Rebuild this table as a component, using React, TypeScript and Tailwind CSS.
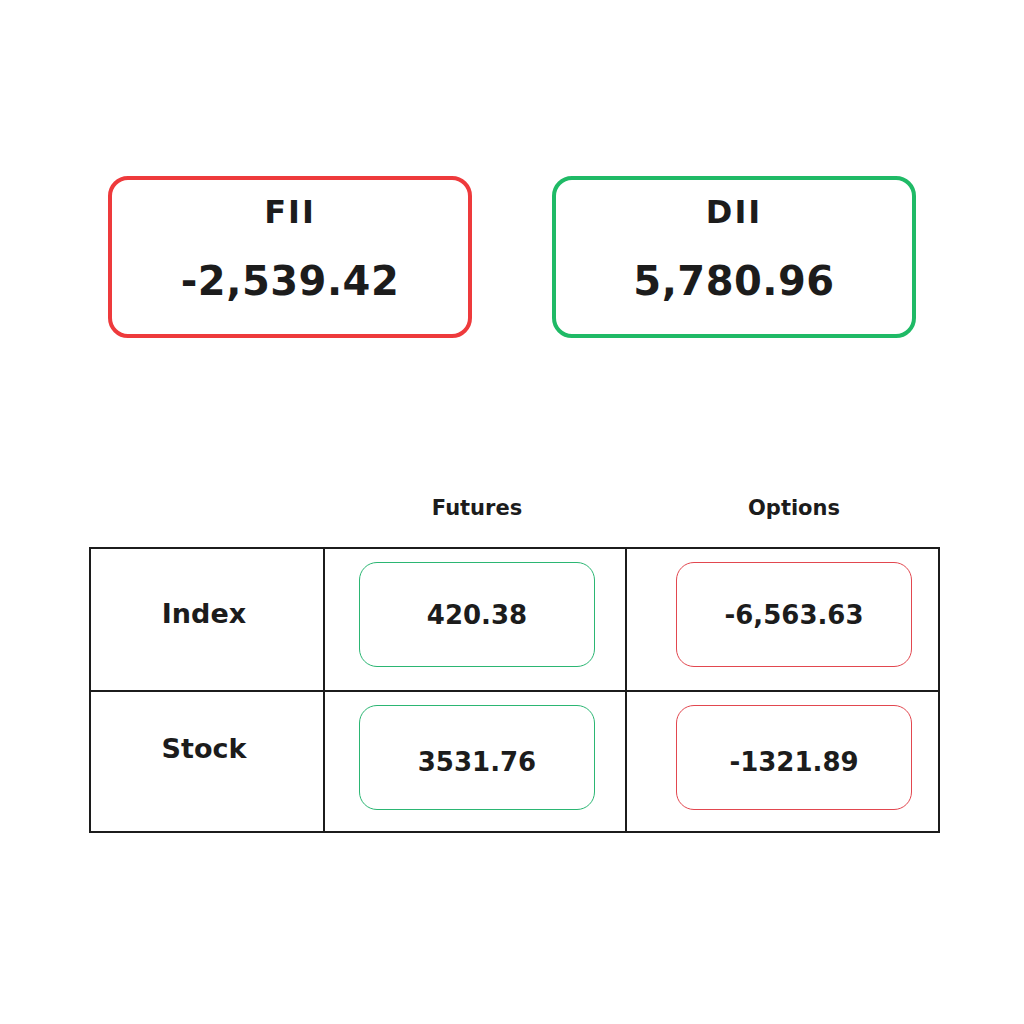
const font = { fontFamily: '"DejaVu Sans", "Liberation Sans", sans-serif' };

export default function App() {
  const rows = [
    { label: "Index", futures: "420.38", options: "-6,563.63", labelPad: "pt-[51px]", valuePad: "pt-0" },
    { label: "Stock", futures: "3531.76", options: "-1321.89", labelPad: "pt-[43px]", valuePad: "pt-[9px]" },
  ];

  return (
    <div className="w-[1024px] h-[1024px] bg-white text-[#1c1c1c] font-bold" style={font}>
      {/* Summary cards */}
      <div className="flex gap-[80px] pl-[108px] pt-[176px]">
        <SummaryCard title="FII" value="-2,539.42" tone="red" />
        <SummaryCard title="DII" value="5,780.96" tone="green" />
      </div>

      {/* Column headers */}
      <div className="flex pl-[89px] mt-[160px]">
        <div className="w-[234px]" />
        <div className="w-[302px] pl-[36px]">
          <div className="w-[236px] text-center text-[21px] leading-none">Futures</div>
        </div>
        <div className="pl-[51px]">
          <div className="w-[236px] text-center text-[21px] leading-none">Options</div>
        </div>
      </div>

      {/* Table */}
      <div className="ml-[89px] mt-[28px] w-[851px] border-2 border-[#1c1c1c]">
        {rows.map((row, i) => (
          <div
            key={row.label}
            className={"flex h-[141px] " + (i > 0 ? "border-t-2 border-[#1c1c1c]" : "")}
          >
            <div className={"w-[232px] pr-[6px] text-center text-[27px] leading-none " + row.labelPad}>
              {row.label}
            </div>
            <div className="w-[302px] border-l-2 border-[#1c1c1c] pl-[34px] pt-[13px]">
              <ValueBox value={row.futures} tone="green" pad={row.valuePad} />
            </div>
            <div className="flex-1 border-l-2 border-[#1c1c1c] pl-[49px] pt-[13px]">
              <ValueBox value={row.options} tone="red" pad={row.valuePad} />
            </div>
          </div>
        ))}
      </div>
    </div>
  );
}

function SummaryCard({ title, value, tone }: { title: string; value: string; tone: "red" | "green" }) {
  return (
    <div
      className={
        "w-[364px] h-[162px] rounded-[20px] border-4 flex flex-col items-center pt-[16px] " +
        (tone === "red" ? "border-[#ee3a3c]" : "border-[#1fba66]")
      }
    >
      <div className="text-[32px] leading-none tracking-[2px]">{title}</div>
      <div className="text-[40px] leading-none mt-[33px] tracking-[0.5px]">{value}</div>
    </div>
  );
}

function ValueBox({ value, tone, pad }: { value: string; tone: "red" | "green"; pad: string }) {
  return (
    <div
      className={
        "w-[236px] h-[105px] rounded-[18px] border-[1.5px] flex items-center justify-center text-[26px] leading-none " +
        pad +
        " " +
        (tone === "red" ? "border-[#e2474f]" : "border-[#2bb673]")
      }
    >
      {value}
    </div>
  );
}
